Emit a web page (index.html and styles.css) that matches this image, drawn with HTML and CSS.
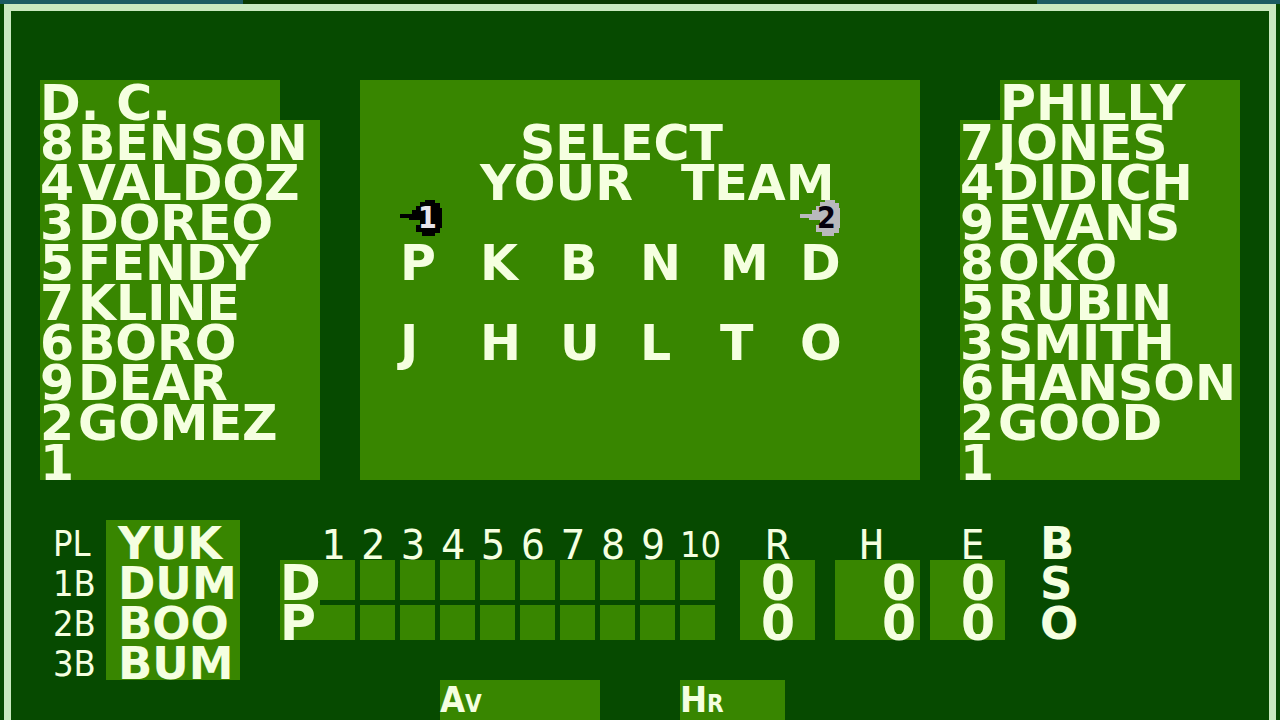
FILE: index.html
```
<!DOCTYPE html>
<html lang="en">
<head>
    <meta charset="UTF-8">
    <meta name="viewport" content="width=device-width, initial-scale=1.0">
    <title>Select Your Team</title>
    <link rel="stylesheet" href="styles.css">
</head>
<body>
    <div class="skyline"></div>
    <div class="board">
        <main class="top">
            <section class="team">
                <h2>D. C.</h2>
                <ul>
                    <li><span class="pos">8</span>BENSON</li>
                    <li><span class="pos">4</span>VALDOZ</li>
                    <li><span class="pos">3</span>DOREO</li>
                    <li><span class="pos">5</span>FENDY</li>
                    <li><span class="pos">7</span>KLINE</li>
                    <li><span class="pos">6</span>BORO</li>
                    <li><span class="pos">9</span>DEAR</li>
                    <li><span class="pos">2</span>GOMEZ</li>
                    <li><span class="pos">1</span></li>
                </ul>
            </section>

            <section class="select">
                <h1><span class="line-one">SELECT</span><span class="line-two"><span>YOUR</span> <span>TEAM</span></span></h1>
                <div class="choices">
                    <svg class="cursor" viewBox="0 0 42 40">
                        <path fill="#000" d="M0 14h12v-4h4V6h4V2h5V0h10v3h5v5h2v20h-2v5h-5v3H22v-4h-6v-7h4v-5H9v-2H0z"/>
                        <text x="18" y="28" fill="#e8e4ec">1</text>
                    </svg>
                    <svg class="cursor cursor-two" viewBox="0 0 42 40">
                        <path fill="#b9b9bd" d="M0 14h12v-4h4V6h4V2h5V0h10v3h4v5h1v20h-1v5h-5v3H22v-4h-6v-7h4v-5H9v-2H0z"/>
                        <text x="17" y="28" fill="#06000e">2</text>
                    </svg>
                    <button>P</button>
                    <button>K</button>
                    <button>B</button>
                    <button>N</button>
                    <button>M</button>
                    <button>D</button>
                    <button>J</button>
                    <button>H</button>
                    <button>U</button>
                    <button>L</button>
                    <button>T</button>
                    <button>O</button>
                </div>
            </section>

            <section class="team away">
                <h2>PHILLY</h2>
                <ul>
                    <li><span class="pos">7</span>JONES</li>
                    <li><span class="pos">4</span>DIDICH</li>
                    <li><span class="pos">9</span>EVANS</li>
                    <li><span class="pos">8</span>OKO</li>
                    <li><span class="pos">5</span>RUBIN</li>
                    <li><span class="pos">3</span>SMITH</li>
                    <li><span class="pos">6</span>HANSON</li>
                    <li><span class="pos">2</span>GOOD</li>
                    <li><span class="pos">1</span></li>
                </ul>
            </section>
        </main>

        <div class="bottom">
            <dl class="umpires">
                <dt>PL</dt><dd>YUK</dd>
                <dt>1B</dt><dd>DUM</dd>
                <dt>2B</dt><dd>BOO</dd>
                <dt>3B</dt><dd>BUM</dd>
            </dl>

            <table class="score">
                <colgroup>
                    <col class="col-tile" span="11">
                    <col class="col-r">
                    <col class="col-h">
                    <col class="col-e">
                </colgroup>
                <thead>
                    <tr>
                        <td></td>
                        <th>1</th><th>2</th><th>3</th><th>4</th><th>5</th>
                        <th>6</th><th>7</th><th>8</th><th>9</th><th class="narrow">10</th>
                        <th class="sum">R</th><th class="sum sum-hits">H</th><th class="sum">E</th>
                    </tr>
                </thead>
                <tbody>
                    <tr>
                        <th>D</th>
                        <td></td><td></td><td></td><td></td><td></td>
                        <td></td><td></td><td></td><td></td><td></td>
                        <td class="runs">0</td><td class="hits">0</td><td class="errors">0</td>
                    </tr>
                    <tr>
                        <th>P</th>
                        <td></td><td></td><td></td><td></td><td></td>
                        <td></td><td></td><td></td><td></td><td></td>
                        <td class="runs">0</td><td class="hits">0</td><td class="errors">0</td>
                    </tr>
                </tbody>
            </table>

            <ul class="count">
                <li>B</li>
                <li>S</li>
                <li>O</li>
            </ul>

            <div class="stats">
                <div class="stat">A<small>V</small></div>
                <div class="stat stat-hr">H<small>R</small></div>
            </div>
        </div>
    </div>
</body>
</html>
```

FILE: styles.css
```
* {
    box-sizing: border-box;
}
body {
    margin: 0;
    min-height: 100vh;
    display: flex;
    flex-direction: column;
    overflow: hidden;
    background: #064a00;
    color: #f5ffe0;
    font-family: "DejaVu Sans", sans-serif;
    font-size: 49px;
    font-weight: bold;
    line-height: 48px;
}
h1, h2, ul, dl, dd {
    margin: 0;
    padding: 0;
    font-size: inherit;
    list-style: none;
}
.skyline {
    height: 4px;
    background: linear-gradient(to right, #1c5c62 19%, #0a3a00 19%, #0a3a00 81%, #1c5c62 81%);
}
.board {
    flex: 1;
    margin: 0 4px;
    padding: 69px 29px 0;
    border: 7px solid #c9e9bf;
    border-bottom: none;
}

/* rosters and team select */
.top {
    display: grid;
    grid-template-columns: 1fr 2fr 1fr;
    gap: 40px;
    margin-bottom: 40px;
    white-space: nowrap;
}
.team h2 {
    height: 40px;
    margin-right: 40px;
    background: #388600;
}
.team ul {
    background: #388600;
}
.team li {
    display: flex;
    height: 40px;
}
.pos {
    width: 38px;
}
.away h2 {
    margin: 0 0 0 40px;
}
.select {
    padding: 40px 40px 0;
    background: #388600;
}
.line-one, .line-two {
    display: block;
    height: 40px;
}
.line-one {
    padding-left: 120px;
}
.line-two {
    display: flex;
    gap: 48px;
    padding-left: 80px;
}
.choices {
    display: grid;
    grid-template-columns: repeat(6, 1fr);
    grid-template-rows: 40px 80px 80px;
}
.choices button {
    padding: 0 0 32px;
    border: none;
    background: none;
    color: inherit;
    font: inherit;
    text-align: left;
    cursor: pointer;
}
.cursor {
    width: 42px;
    height: 40px;
    font-family: "DejaVu Sans Condensed", "DejaVu Sans", sans-serif;
    font-size: 30px;
}
.cursor-two {
    grid-column: 6;
}

/* scoreboard */
.bottom {
    display: grid;
    grid-template-columns: minmax(0, 205fr) minmax(0, 725fr) minmax(0, 200fr);
    grid-template-rows: 160px 40px;
    column-gap: 35px;
}
.umpires {
    display: grid;
    grid-template-columns: 66px 1fr;
    grid-auto-rows: 40px;
    padding-right: 5px;
    font-size: 45px;
}
.umpires dt {
    padding-left: 13px;
    font-family: "DejaVu Sans Condensed", "DejaVu Sans", sans-serif;
    font-size: 36px;
    font-weight: normal;
}
.umpires dd {
    padding-left: 12px;
    background: #388600;
}
.score {
    width: 100%;
    height: 120px;
    table-layout: fixed;
    border-collapse: separate;
    border-spacing: 0;
}
.score th, .score td {
    height: 40px;
    padding: 0;
}
.col-tile {
    width: 40px;
}
.col-r {
    width: 95px;
}
.col-h {
    width: 105px;
}
.col-e {
    width: 85px;
}
.score thead th {
    padding: 10px 14px 0 0;
    font-family: "DejaVu Sans Mono", monospace;
    font-size: 40px;
    font-weight: normal;
    line-height: 30px;
}
.score thead .narrow {
    padding-right: 6px;
    font-family: "DejaVu Sans Condensed", "DejaVu Sans", sans-serif;
    font-size: 36px;
}
.score thead .sum {
    padding: 10px 0 0 20px;
}
.score thead .sum-hits {
    padding-left: 8px;
}
.score tbody th, .score tbody td {
    padding-top: 8px;
    background: #388600;
    line-height: 32px;
    text-align: left;
}
.score tbody td {
    border-right: 5px solid #064a00;
}
.score tbody tr:last-child td {
    border-top: 5px solid #064a00;
}
.score tbody tr .runs, .score tbody tr .hits, .score tbody tr .errors {
    border: solid #064a00;
    border-width: 0 0 0 20px;
    text-align: right;
    padding-right: 20px;
}
.score tbody tr .hits {
    padding-right: 4px;
}
.score tbody tr .errors {
    border-left-width: 10px;
    padding-right: 10px;
}
.score tbody tr:last-child .runs,
.score tbody tr:last-child .hits,
.score tbody tr:last-child .errors {
    border-top: none;
}
.count {
    font-size: 45px;
}
.count li {
    height: 40px;
}
.stats {
    grid-column: 2;
    display: flex;
    gap: 80px;
    padding-left: 160px;
}
.stat {
    width: 160px;
    height: 40px;
    background: #388600;
    font-family: "DejaVu Sans Condensed", "DejaVu Sans", sans-serif;
    font-size: 36px;
    line-height: 40px;
}
.stat small {
    font-size: 24px;
}
.stat-hr {
    width: 105px;
}
```
